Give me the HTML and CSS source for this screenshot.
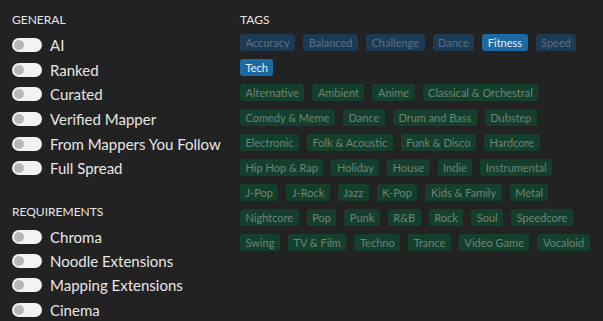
FILE: index.html
```html
<!DOCTYPE html>
<html>
<head>
<meta charset="utf-8">
<link rel="stylesheet" href="styles.css">
</head>
<body>
<div class="page">
  <div class="col-left">
    <div class="section">
      <div class="heading">General</div>
      <label class="row"><span class="toggle"><span class="knob"></span></span><span class="label">AI</span></label>
      <label class="row"><span class="toggle"><span class="knob"></span></span><span class="label">Ranked</span></label>
      <label class="row"><span class="toggle"><span class="knob"></span></span><span class="label">Curated</span></label>
      <label class="row"><span class="toggle"><span class="knob"></span></span><span class="label">Verified Mapper</span></label>
      <label class="row"><span class="toggle"><span class="knob"></span></span><span class="label">From Mappers You Follow</span></label>
      <label class="row"><span class="toggle"><span class="knob"></span></span><span class="label">Full Spread</span></label>
    </div>
    <div class="section section-req">
      <div class="heading">Requirements</div>
      <label class="row row-req"><span class="toggle"><span class="knob"></span></span><span class="label">Chroma</span></label>
      <label class="row row-req"><span class="toggle"><span class="knob"></span></span><span class="label">Noodle Extensions</span></label>
      <label class="row row-req"><span class="toggle"><span class="knob"></span></span><span class="label">Mapping Extensions</span></label>
      <label class="row row-req"><span class="toggle"><span class="knob"></span></span><span class="label">Cinema</span></label>
    </div>
  </div>
  <div class="col-right">
    <div class="heading">Tags</div>
    <div class="tags">
      <span class="tag blue">Accuracy</span>
      <span class="tag blue">Balanced</span>
      <span class="tag blue">Challenge</span>
      <span class="tag blue">Dance</span>
      <span class="tag blue active">Fitness</span>
      <span class="tag blue">Speed</span>
      <span class="tag blue active">Tech</span>
    </div>
    <div class="tags">
      <span class="tag green">Alternative</span>
      <span class="tag green">Ambient</span>
      <span class="tag green">Anime</span>
      <span class="tag green">Classical &amp; Orchestral</span>
      <span class="tag green">Comedy &amp; Meme</span>
      <span class="tag green">Dance</span>
      <span class="tag green">Drum and Bass</span>
      <span class="tag green">Dubstep</span>
      <span class="tag green">Electronic</span>
      <span class="tag green">Folk &amp; Acoustic</span>
      <span class="tag green">Funk &amp; Disco</span>
      <span class="tag green">Hardcore</span>
      <span class="tag green">Hip Hop &amp; Rap</span>
      <span class="tag green">Holiday</span>
      <span class="tag green">House</span>
      <span class="tag green">Indie</span>
      <span class="tag green">Instrumental</span>
      <span class="tag green">J-Pop</span>
      <span class="tag green">J-Rock</span>
      <span class="tag green">Jazz</span>
      <span class="tag green">K-Pop</span>
      <span class="tag green">Kids &amp; Family</span>
      <span class="tag green">Metal</span>
      <span class="tag green">Nightcore</span>
      <span class="tag green">Pop</span>
      <span class="tag green">Punk</span>
      <span class="tag green">R&amp;B</span>
      <span class="tag green">Rock</span>
      <span class="tag green">Soul</span>
      <span class="tag green">Speedcore</span>
      <span class="tag green">Swing</span>
      <span class="tag green">TV &amp; Film</span>
      <span class="tag green">Techno</span>
      <span class="tag green">Trance</span>
      <span class="tag green">Video Game</span>
      <span class="tag green">Vocaloid</span>
    </div>
  </div>
</div>
</body>
</html>
```

FILE: styles.css
```css
html, body {
  margin: 0;
  padding: 0;
  background: #222222;
  font-family: Lato, "Noto Sans", sans-serif;
  color: #e0e0e0;
}

.page {
  display: flex;
  padding: 12px 12px 0 12px;
  gap: 12px;
}

.col-left {
  width: 216px;
  flex: none;
  display: flex;
  flex-direction: column;
}

.col-right {
  flex: 1;
  min-width: 0;
}

.heading {
  font-size: 12px;
  line-height: 15px;
  text-transform: uppercase;
  color: #e6e6e6;
}

.col-left .heading {
  margin-bottom: 6px;
}

.section-req {
  margin-top: 23px;
}

.row {
  display: flex;
  align-items: center;
  gap: 8px;
  height: 24.6px;
}

.row-req {
  height: 24.3px;
}

.toggle {
  position: relative;
  width: 30px;
  height: 14px;
  border-radius: 7px;
  background: #f2f2f2;
  flex: none;
}

.knob {
  position: absolute;
  left: 2px;
  top: 2px;
  width: 10px;
  height: 10px;
  border-radius: 50%;
  background: #b8b8b8;
}

.label {
  font-size: 15px;
  color: #e6e6e6;
}

.tags {
  display: flex;
  flex-wrap: wrap;
  gap: 8px 8px;
  margin-bottom: 8px;
  margin-top: 7px;
}

.tags + .tags {
  margin-top: 0;
}

.tag {
  font-size: 11px;
  line-height: 17px;
  height: 17px;
  padding: 0 5.5px;
  border-radius: 3px;
  white-space: nowrap;
}

.tag.blue {
  background: #1c3a52;
  color: #56708a;
}

.tag.blue.active {
  background: #1b6aa3;
  color: #e8eef4;
}

.tag.green {
  background: #143f2d;
  color: #6b8477;
}
```
